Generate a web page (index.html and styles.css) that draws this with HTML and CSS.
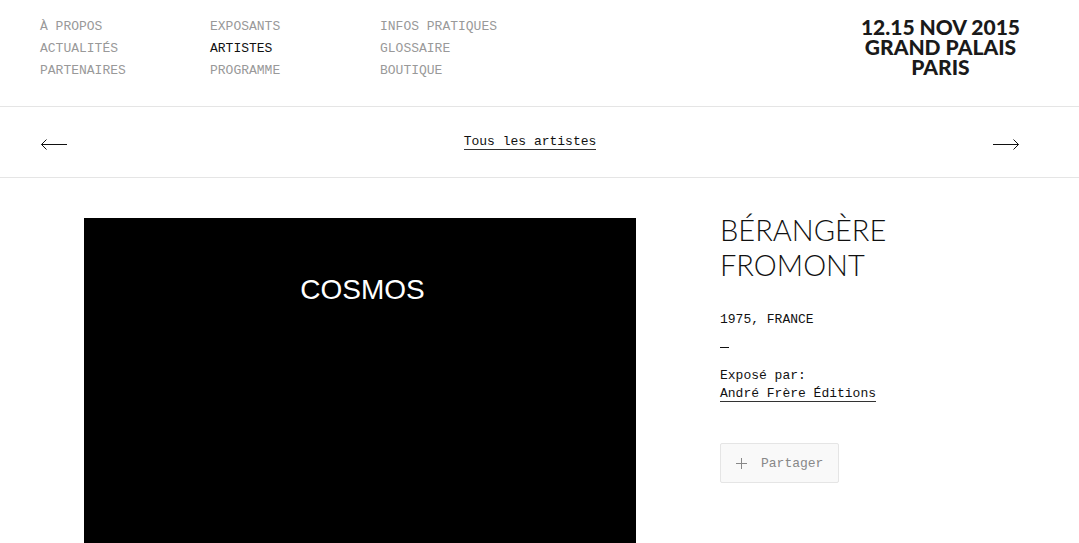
FILE: index.html
```
<!DOCTYPE html>
<html lang="fr">
<head>
  <meta charset="UTF-8" />
  <meta name="viewport" content="width=device-width, initial-scale=1.0" />
  <title>Bérangère Fromont</title>
  <link rel="stylesheet" href="styles.css">
</head>
<body>
  <header class="header">
    <nav class="menu">
      <ul>
        <li><a href="#">À PROPOS</a></li>
        <li><a href="#">ACTUALITÉS</a></li>
        <li><a href="#">PARTENAIRES</a></li>
      </ul>
      <ul>
        <li><a href="#">EXPOSANTS</a></li>
        <li><a href="#" class="active">ARTISTES</a></li>
        <li><a href="#">PROGRAMME</a></li>
      </ul>
      <ul>
        <li><a href="#">INFOS PRATIQUES</a></li>
        <li><a href="#">GLOSSAIRE</a></li>
        <li><a href="#">BOUTIQUE</a></li>
      </ul>
    </nav>
    <p class="event">12.15 NOV 2015<br>GRAND PALAIS<br>PARIS</p>
  </header>

  <nav class="pager">
    <a href="#" class="arrow" aria-label="Artiste précédent">
      <svg width="28" height="12" viewBox="0 0 28 12"><path d="M27 6.5H1.5M6.5 1.5l-5 5 5 5" /></svg>
    </a>
    <p><a href="#" class="link">Tous les artistes</a></p>
    <a href="#" class="arrow" aria-label="Artiste suivant">
      <svg width="28" height="12" viewBox="0 0 28 12"><path d="M1 6.5h25.5M21.5 1.5l5 5-5 5" /></svg>
    </a>
  </nav>

  <main class="artist">
    <div class="media">COSMOS</div>
    <div class="infos">
      <h1>BÉRANGÈRE<br>FROMONT</h1>
      <p>1975, FRANCE</p>
      <hr>
      <p>Exposé par:<br><a href="#" class="link">André Frère Éditions</a></p>
      <button type="button" class="share">
        <svg width="11" height="11" viewBox="0 0 11 11"><path d="M0 5.5h11M5.5 0v11" /></svg>
        <span>Partager</span>
      </button>
    </div>
  </main>
</body>
</html>
```
FILE: styles.css
```
* {
  box-sizing: border-box;
}

body {
  display: flex;
  flex-direction: column;
  min-height: 100vh;
  margin: 0;
  background-color: #fff;
  color: #111;
  font-family: "Liberation Mono", "Courier New", monospace;
  font-size: 13px;
  line-height: 18px;
}

p,
h1,
ul {
  margin: 0;
  padding: 0;
}

ul {
  list-style: none;
}

a {
  color: inherit;
  text-decoration: none;
}

svg {
  display: block;
  fill: none;
  stroke: currentColor;
}

.header {
  display: flex;
  justify-content: space-between;
  padding: 16px 59px 24px 40px;
  border-bottom: 1px solid #e5e5e5;
}

.menu {
  display: flex;
  color: #999;
  line-height: 22px;
}

.menu ul {
  width: 170px;
}

.menu .active {
  color: #111;
}

.event {
  padding-top: 1px;
  color: #1a1a1a;
  font-family: Lato, sans-serif;
  font-size: 21px;
  font-weight: 900;
  line-height: 20px;
  text-align: center;
}

.pager {
  display: flex;
  justify-content: space-between;
  align-items: center;
  height: 71px;
  padding: 0 59px 0 40px;
  border-bottom: 1px solid #e5e5e5;
}

.arrow {
  padding-top: 4px;
}

.link {
  border-bottom: 1px solid #333;
}

.artist {
  display: flex;
  flex: 1;
  padding: 40px 59px 0 84px;
}

.media {
  flex: 1;
  margin-right: 84px;
  padding: 56px 0 0 5px;
  background-color: #000;
  color: #fff;
  font-family: "Liberation Sans", Arial, sans-serif;
  font-size: 28px;
  line-height: 32px;
  text-align: center;
}

.infos {
  width: 300px;
}

.infos h1 {
  margin: -6px 0 29px;
  font-family: Lato, sans-serif;
  font-size: 29px;
  font-weight: 300;
  line-height: 35px;
}

.infos hr {
  width: 9px;
  margin: 18px 0 19px;
  border: 0;
  border-top: 1px solid #111;
}

.share {
  display: flex;
  align-items: center;
  gap: 14px;
  height: 40px;
  margin-top: 40px;
  padding: 0 15px;
  border: 1px solid #e5e5e5;
  border-radius: 2px;
  background-color: #f9f9f9;
  color: #888;
  font: inherit;
  cursor: pointer;
}

.share span {
  padding-top: 2px;
}

@media (max-width: 800px) {
  .header,
  .artist {
    flex-direction: column;
    gap: 30px;
  }

  .media {
    min-height: 300px;
    margin-right: 0;
  }
}
```
